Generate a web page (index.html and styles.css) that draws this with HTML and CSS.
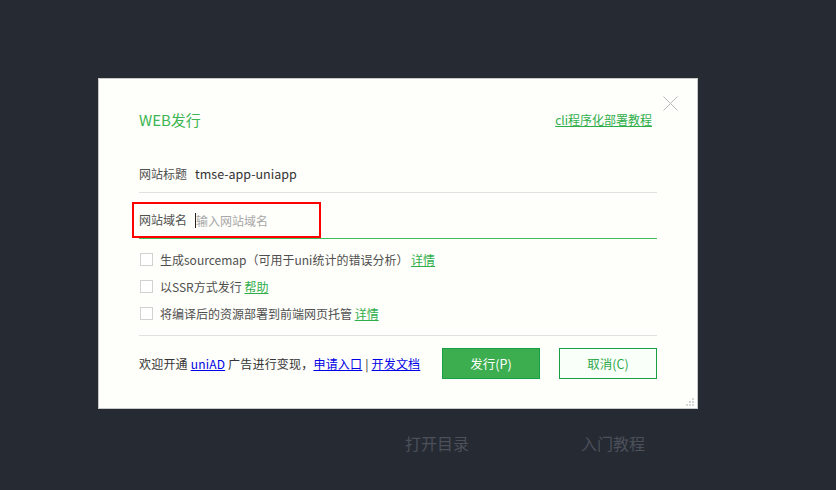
FILE: index.html
```
<!DOCTYPE html>
<html lang="zh-CN">

<head>
    <meta charset="UTF-8">
    <meta name="viewport" content="width=device-width, initial-scale=1.0">
    <title>WEB发行</title>
    <link rel="stylesheet" href="styles.css">
</head>

<body>
    <!-- welcome page behind the dialog -->
    <div class="welcome">
        <a class="welcome-link">打开目录</a>
        <a class="welcome-link">入门教程</a>
    </div>

    <!-- publish dialog -->
    <div class="dialog">
        <span class="dialog-close">
            <svg width="15" height="15" viewBox="0 0 15 15">
                <path d="M0.5 0.5 L14.5 14.5 M14.5 0.5 L0.5 14.5" stroke="#b9b9b9" stroke-width="1" fill="none" />
            </svg>
        </span>

        <div class="dialog-header">
            <span class="dialog-title">WEB发行</span>
            <a class="link-green header-link">cli程序化部署教程</a>
        </div>

        <div class="field field-first">
            <span class="field-label">网站标题</span>
            <span class="field-value">tmse-app-uniapp</span>
        </div>
        <div class="field field-active">
            <span class="field-label">网站域名</span>
            <span class="caret"></span>
            <input type="text" class="field-input" placeholder="输入网站域名">
            <span class="mark-box"></span>
        </div>

        <div class="options">
            <label class="option"><span class="check"></span>生成sourcemap（可用于uni统计的错误分析） <a class="link-green">详情</a></label>
            <label class="option"><span class="check"></span>以SSR方式发行 <a class="link-green">帮助</a></label>
            <label class="option"><span class="check"></span>将编译后的资源部署到前端网页托管 <a class="link-green">详情</a></label>
        </div>

        <div class="dialog-footer">
            <div class="footer-text">欢迎开通 <a class="link-blue">uniAD</a> 广告进行变现，<a class="link-blue">申请入口</a> | <a class="link-blue">开发文档</a></div>
            <button class="btn btn-primary">发行(P)</button>
            <button class="btn btn-default">取消(C)</button>
        </div>

        <span class="grip">
            <svg width="9" height="9" viewBox="0 0 9 9">
                <rect x="6" y="0" width="2" height="2" fill="#d6d6d6" />
                <rect x="3" y="3" width="2" height="2" fill="#d6d6d6" />
                <rect x="6" y="3" width="2" height="2" fill="#d6d6d6" />
                <rect x="0" y="6" width="2" height="2" fill="#d6d6d6" />
                <rect x="3" y="6" width="2" height="2" fill="#d6d6d6" />
                <rect x="6" y="6" width="2" height="2" fill="#d6d6d6" />
            </svg>
        </span>
    </div>
</body>

</html>
```

FILE: styles.css
```
html,
body {
    margin: 0;
    height: 100%;
}

body {
    background-color: #262a33;
    font-family: "Microsoft YaHei", "Noto Sans CJK SC", "Noto Sans", sans-serif;
    font-size: 12px;
    color: #555;
    position: relative;
    overflow: hidden;
}

.welcome {
    display: flex;
    gap: 112px;
    padding-top: 431px;
    padding-left: 405px;
}

.welcome-link {
    font-size: 16px;
    line-height: 24px;
    color: #4b505a;
}

.dialog {
    position: absolute;
    left: 98px;
    top: 78px;
    width: 600px;
    height: 331px;
    box-sizing: border-box;
    border: 1px solid #c9c9c9;
    background-color: #fefefa;
    padding: 29px 40px 0 40px;
}

.dialog-close {
    position: absolute;
    top: 17px;
    right: 19px;
    width: 15px;
    height: 15px;
    display: block;
}

.dialog-close svg {
    display: block;
}

.dialog-header {
    display: flex;
    justify-content: space-between;
    align-items: center;
    height: 22px;
}

.dialog-title {
    font-size: 15px;
    color: #3db553;
}

.header-link {
    margin-right: 5px;
}

.link-green {
    color: #2fae4a;
    text-decoration: underline;
    cursor: pointer;
}

.link-blue {
    color: #0000e6;
    text-decoration: underline;
    cursor: pointer;
}

.field {
    display: flex;
    align-items: center;
    height: 20px;
    line-height: 20px;
    position: relative;
}

.field-first {
    margin-top: 34px;
    padding-bottom: 8px;
    border-bottom: 1px solid #e1e1e1;
}

.field-active {
    padding-top: 17px;
    padding-bottom: 8px;
    border-bottom: 1px solid #40c05a;
}

.field-label {
    width: 48px;
    margin-right: 8px;
    color: #4f4f4f;
}

.field-value {
    color: #333;
    font-size: 12.5px;
}

.caret {
    width: 1px;
    height: 15px;
    background-color: #222;
}

.field-input {
    flex: 1;
    border: none;
    outline: none;
    background: transparent;
    font-family: inherit;
    font-size: 12px;
    color: #333;
    padding: 0;
    height: 20px;
}

.field-input::placeholder {
    color: #a8a8a8;
}

/* red annotation frame drawn over the domain row */
.mark-box {
    position: absolute;
    left: -7px;
    top: 9px;
    width: 189px;
    height: 36px;
    border: 2px solid #ff0000;
    box-sizing: border-box;
    pointer-events: none;
}

.options {
    padding-top: 7px;
    padding-bottom: 8px;
    border-bottom: 1px solid #e1e1e1;
}

.option {
    display: flex;
    align-items: center;
    height: 27px;
    color: #4f4f4f;
    white-space: pre;
}

.check {
    width: 13px;
    height: 13px;
    box-sizing: border-box;
    border: 1px solid #d2d2d2;
    background-color: #fff;
    margin-left: 1px;
    margin-right: 7px;
}

.dialog-footer {
    display: flex;
    align-items: center;
    padding-top: 12px;
}

.footer-text {
    flex: 1;
    color: #333;
    letter-spacing: 0.2px;
}

.btn {
    width: 98px;
    height: 31px;
    box-sizing: border-box;
    font-family: inherit;
    font-size: 12.5px;
    cursor: pointer;
    padding: 0;
}

.btn-primary {
    background-color: #3cae4f;
    border: 1px solid #16a043;
    color: #fff;
    margin-right: 19px;
}

.btn-default {
    background-color: #f9fff9;
    border: 1px solid #16a043;
    color: #2fa84a;
}

.grip {
    position: absolute;
    right: 2px;
    bottom: 1px;
    display: block;
    width: 9px;
    height: 9px;
}

.grip svg {
    display: block;
}
```
